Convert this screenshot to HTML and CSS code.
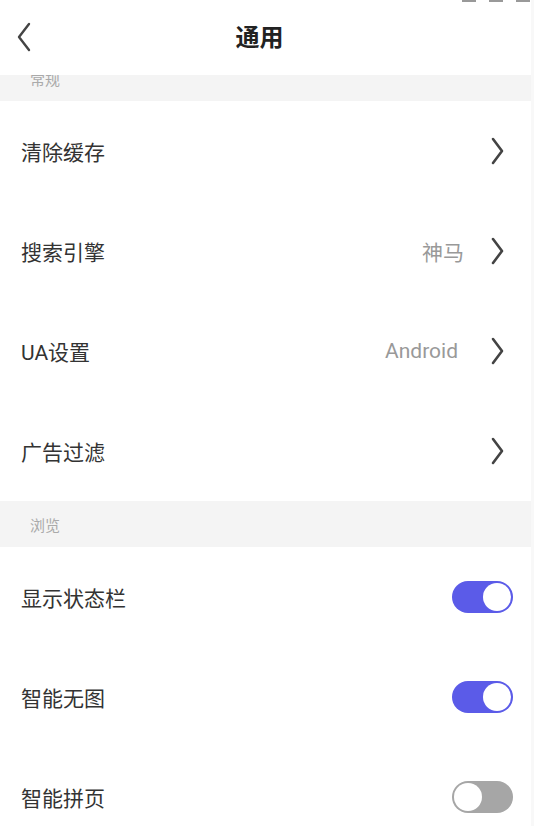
FILE: index.html
```html
<!DOCTYPE html>
<html lang="zh-CN">
<head>
<meta charset="utf-8">
<title>通用</title>
<link rel="stylesheet" href="styles.css">
</head>
<body>
<div class="page">
  <header class="topbar">
    <svg class="back" width="16" height="30" viewBox="0 0 16 30"><path d="M13 2 L3 15 L13 28" fill="none" stroke="#444" stroke-width="2.4" stroke-linecap="round" stroke-linejoin="round"/></svg>
    <h1 class="title">通用</h1>
    <div class="status-marks"><span></span><span></span><span></span></div>
  </header>
  <main class="list">
    <div class="section">常规</div>
    <div class="row"><span class="label">清除缓存</span><span class="right"><svg class="chev" width="24" height="28" viewBox="0 0 24 28"><path d="M4 2 L13 14 L4 26" fill="none" stroke="#444" stroke-width="2.6" stroke-linecap="round" stroke-linejoin="round"/></svg></span></div>
    <div class="row"><span class="label">搜索引擎</span><span class="right"><span class="value">神马</span><svg class="chev" width="24" height="28" viewBox="0 0 24 28"><path d="M4 2 L13 14 L4 26" fill="none" stroke="#444" stroke-width="2.6" stroke-linecap="round" stroke-linejoin="round"/></svg></span></div>
    <div class="row"><span class="label">UA设置</span><span class="right"><span class="value latin">Android</span><svg class="chev" width="24" height="28" viewBox="0 0 24 28"><path d="M4 2 L13 14 L4 26" fill="none" stroke="#444" stroke-width="2.6" stroke-linecap="round" stroke-linejoin="round"/></svg></span></div>
    <div class="row"><span class="label">广告过滤</span><span class="right"><svg class="chev" width="24" height="28" viewBox="0 0 24 28"><path d="M4 2 L13 14 L4 26" fill="none" stroke="#444" stroke-width="2.6" stroke-linecap="round" stroke-linejoin="round"/></svg></span></div>
    <div class="section">浏览</div>
    <div class="row"><span class="label">显示状态栏</span><span class="toggle on"><span class="knob"></span></span></div>
    <div class="row"><span class="label">智能无图</span><span class="toggle on"><span class="knob"></span></span></div>
    <div class="row"><span class="label">智能拼页</span><span class="toggle"><span class="knob"></span></span></div>
  </main>
</div>
</body>
</html>
```
FILE: styles.css
```css
* { box-sizing: border-box; }
html, body { margin: 0; padding: 0; }
body {
  background: #f8f8f8;
  font-family: Roboto, "Noto Sans CJK SC", sans-serif;
  overflow: hidden;
}
.page {
  width: 531px;
  height: 826px;
  background: #fff;
  position: relative;
  overflow: hidden;
}
.topbar {
  position: absolute;
  top: 0;
  left: 0;
  right: 0;
  height: 75px;
  background: #fff;
  display: flex;
  align-items: center;
  justify-content: center;
  z-index: 2;
}
.back {
  position: absolute;
  left: 16px;
  top: 22px;
}
.title {
  margin: 0 12px 0 0;
  font-size: 24px;
  font-weight: 700;
  color: #222;
  line-height: 1;
}
.status-marks {
  position: absolute;
  top: 0;
  right: 1px;
  display: flex;
  gap: 13px;
}
.status-marks span {
  width: 14px;
  height: 2px;
  background: #999;
}
.list {
  padding-top: 55px;
}
.section {
  height: 46px;
  background: #f4f4f4;
  display: flex;
  align-items: center;
  padding-left: 30px;
  font-size: 15px;
  color: #aaa;
}
.row {
  height: 100px;
  display: flex;
  align-items: center;
  justify-content: space-between;
  padding: 0 18px 0 21px;
}
.label {
  font-size: 21px;
  color: #333;
}
.right {
  display: flex;
  align-items: center;
}
.value {
  font-size: 21px;
  color: #999;
  margin-right: 25px;
}
.value.latin {
  margin-right: 31px;
}
.chev { display: block; }
.toggle {
  width: 61px;
  height: 32px;
  border-radius: 16px;
  background: #a6a6a6;
  display: flex;
  align-items: center;
  padding: 0 2px;
}
.toggle.on {
  background: #5b5be8;
  justify-content: flex-end;
}
.knob {
  width: 28px;
  height: 28px;
  border-radius: 50%;
  background: #fff;
}
```
